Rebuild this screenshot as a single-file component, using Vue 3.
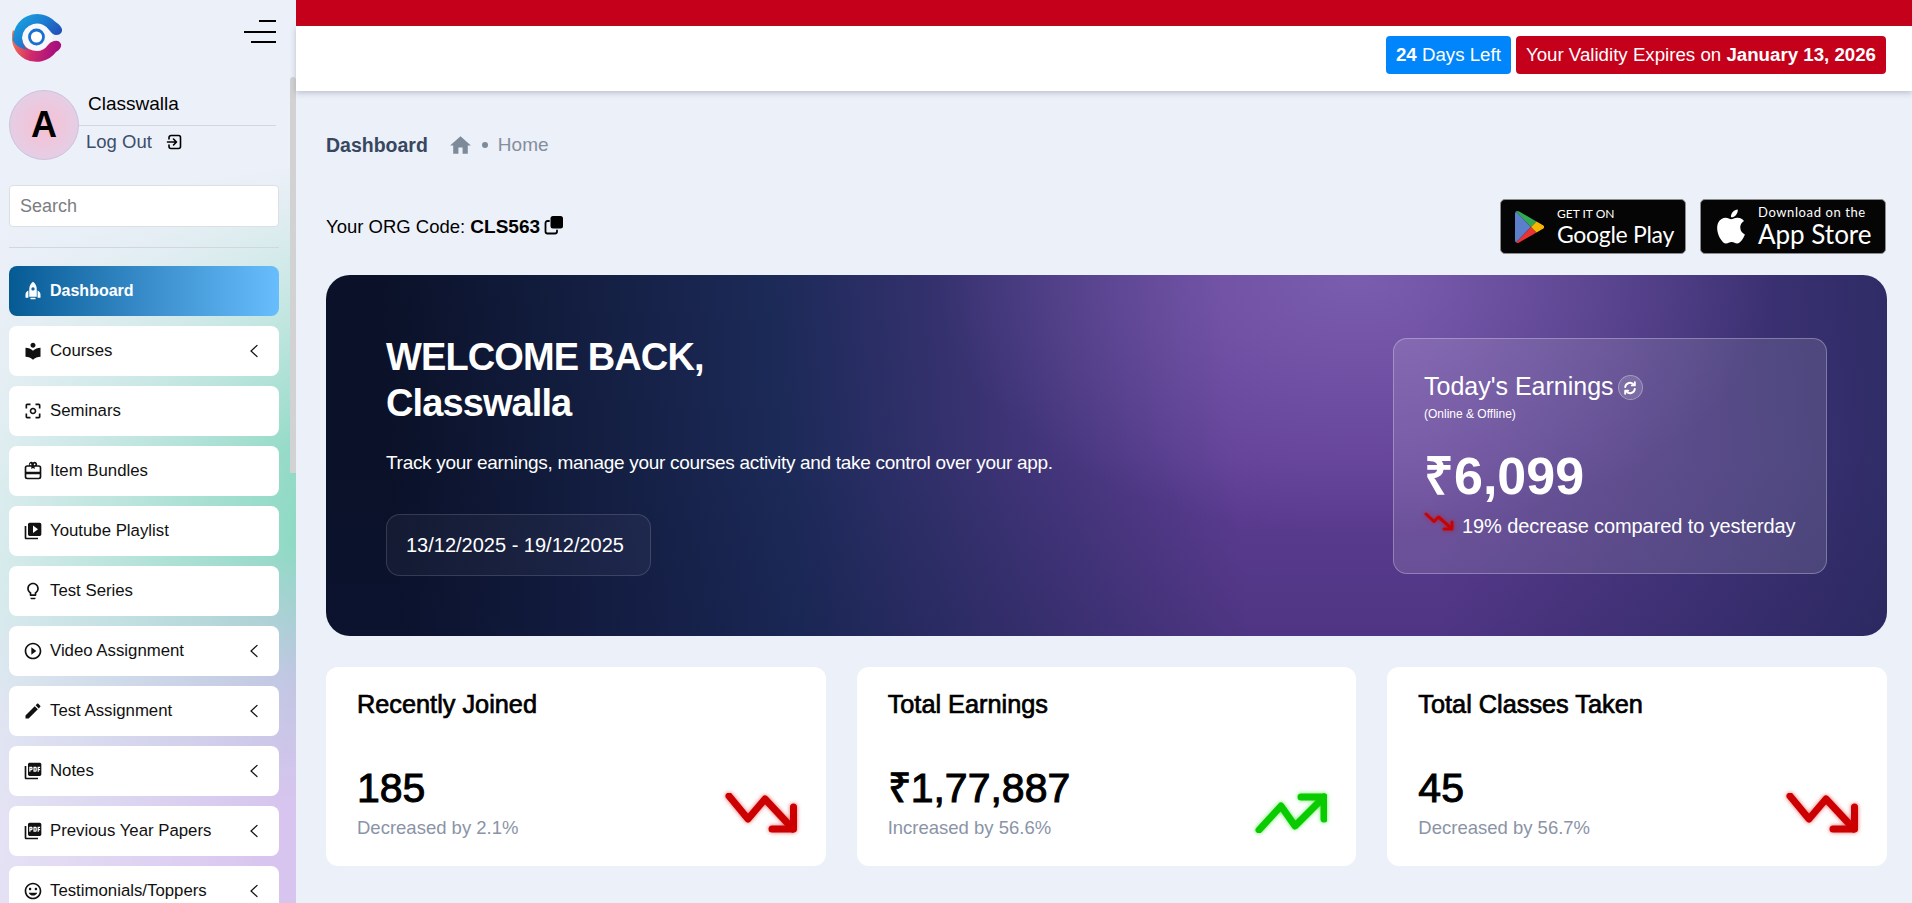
<script setup>
const P = {
  rocket: 'M12 1c3 2.300 4.500 5.300 4.500 9v9h-9v-9C7.500 6.300 9 3.300 12 1zm0 6.500a2 2 0 1 0 0 4 2 2 0 0 0 0-4zM6.500 11.500V20H3v-3.500c0-2.200 1.300-4 3.500-5zm11 0c2.200 1 3.500 2.800 3.500 5V20h-3.500v-8.500zM9 20h6v2H9z',
  book: 'M12 11.55C9.64 9.35 6.48 8 3 8v11c3.48 0 6.64 1.35 9 3.55 2.36-2.19 5.52-3.55 9-3.55V8c-3.48 0-6.64 1.35-9 3.55zM12 8c1.66 0 3-1.34 3-3s-1.34-3-3-3-3 1.34-3 3 1.34 3 3 3z',
  focus: 'M5 15H3v4c0 1.1.9 2 2 2h4v-2H5v-4zM5 5h4V3H5c-1.1 0-2 .9-2 2v4h2V5zm14-2h-4v2h4v4h2V5c0-1.1-.9-2-2-2zm0 16h-4v2h4c1.1 0 2-.9 2-2v-4h-2v4zM12 8c-2.21 0-4 1.79-4 4s1.79 4 4 4 4-1.79 4-4-1.79-4-4-4zm0 6c-1.1 0-2-.9-2-2s.9-2 2-2 2 .9 2 2-.9 2-2 2z',
  gift: 'M5 5h2.200A3 3 0 0 1 7 4a3 3 0 0 1 5-2.200A3 3 0 0 1 17 4c0 .35-.06.68-.2 1H19a3 3 0 0 1 3 3v11a3 3 0 0 1-3 3H5a3 3 0 0 1-3-3V8a3 3 0 0 1 3-3zm5-1a1 1 0 1 0-1 1h1V4zm5 0a1 1 0 1 0-2 0v1h1a1 1 0 0 0 1-1zM4 8v5h16V8a1 1 0 0 0-1-1h-5v2.500l-2-1.200-2 1.200V7H5a1 1 0 0 0-1 1zm0 8v3a1 1 0 0 0 1 1h14a1 1 0 0 0 1-1v-3H4z',
  video: 'M4 6H2v14c0 1.1.9 2 2 2h14v-2H4V6zm16-4H8c-1.1 0-2 .9-2 2v12c0 1.1.9 2 2 2h12c1.1 0 2-.9 2-2V4c0-1.1-.9-2-2-2zm-8 12.500v-9l6 4.500-6 4.500z',
  bulb: 'M9 21c0 .55.45 1 1 1h4c.55 0 1-.45 1-1v-1H9v1zm3-19C8.14 2 5 5.14 5 9c0 2.38 1.19 4.47 3 5.74V17c0 .55.45 1 1 1h6c.55 0 1-.45 1-1v-2.260c1.810-1.270 3-3.360 3-5.740 0-3.860-3.140-7-7-7zm2.850 11.100l-.85.6V16h-4v-2.300l-.85-.6C7.800 12.160 7 10.630 7 9c0-2.760 2.240-5 5-5s5 2.240 5 5c0 1.630-.8 3.160-2.150 4.100z',
  play: 'M10 16.500l6-4.500-6-4.500v9zM12 2C6.480 2 2 6.480 2 12s4.480 10 10 10 10-4.480 10-10S17.520 2 12 2zm0 18c-4.410 0-8-3.590-8-8s3.590-8 8-8 8 3.590 8 8-3.590 8-8 8z',
  edit: 'M3 17.250V21h3.750L17.810 9.940l-3.750-3.750L3 17.250zM20.710 7.040c.39-.39.39-1.020 0-1.410l-2.340-2.340c-.39-.39-1.020-.39-1.410 0l-1.830 1.830 3.750 3.750 1.830-1.830z',
  pdf: 'M20 2H8c-1.100 0-2 .9-2 2v12c0 1.100.9 2 2 2h12c1.100 0 2-.9 2-2V4c0-1.100-.9-2-2-2zm-8.500 7.500c0 .83-.67 1.500-1.500 1.500H9v2H7.500V7H10c.83 0 1.500.67 1.500 1.500v1zm5 2c0 .83-.67 1.500-1.500 1.500h-2.500V7H15c.83 0 1.500.67 1.500 1.500v3zm4-3H19v1h1.500V11H19v2h-1.500V7h3v1.500zM9 9.500h1v-1H9v1zM4 6H2v14c0 1.100.9 2 2 2h14v-2H4V6zm10 5.500h1v-3h-1v3z',
  smile: 'M11.990 2C6.470 2 2 6.480 2 12s4.470 10 9.990 10C17.520 22 22 17.520 22 12S17.520 2 11.990 2zM12 20c-4.420 0-8-3.580-8-8s3.580-8 8-8 8 3.580 8 8-3.580 8-8 8zm3.500-9c.83 0 1.500-.67 1.500-1.500S16.330 8 15.500 8 14 8.670 14 9.500s.67 1.500 1.500 1.500zm-7 0c.83 0 1.500-.67 1.500-1.500S9.330 8 8.500 8 7 8.670 7 9.500 7.670 11 8.500 11zm3.500 6.500c2.330 0 4.310-1.460 5.110-3.500H6.890c.8 2.040 2.780 3.500 5.110 3.500z'
}
const menu = [
  { label: 'Dashboard', icon: P.rocket, active: true },
  { label: 'Courses', icon: P.book, more: true },
  { label: 'Seminars', icon: P.focus },
  { label: 'Item Bundles', icon: P.gift },
  { label: 'Youtube Playlist', icon: P.video },
  { label: 'Test Series', icon: P.bulb },
  { label: 'Video Assignment', icon: P.play, more: true },
  { label: 'Test Assignment', icon: P.edit, more: true },
  { label: 'Notes', icon: P.pdf, more: true },
  { label: 'Previous Year Papers', icon: P.pdf, more: true },
  { label: 'Testimonials/Toppers', icon: P.smile, more: true }
]
const stats = [
  { title: 'Recently Joined', value: '185', sub: 'Decreased by 2.1%', up: false },
  { title: 'Total Earnings', value: '₹1,77,887', sub: 'Increased by 56.6%', up: true },
  { title: 'Total Classes Taken', value: '45', sub: 'Decreased by 56.7%', up: false }
]
</script>

<template>
  <div class="app">
    <aside class="side">
      <div class="scroll"></div>
      <div class="brand">
        <svg class="logo" viewBox="0 0 50 50" width="50" height="50">
          <defs>
            <linearGradient id="lgTop" x1="0.1" y1="0" x2="0.9" y2="0.6">
              <stop offset="0" stop-color="#18a6de" />
              <stop offset="0.55" stop-color="#1c7dd2" />
              <stop offset="1" stop-color="#2350b6" />
            </linearGradient>
            <linearGradient id="lgBot" x1="0" y1="0" x2="1" y2="0.15">
              <stop offset="0" stop-color="#f77a4e" />
              <stop offset="0.5" stop-color="#cf2a6c" />
              <stop offset="1" stop-color="#a50f7e" />
            </linearGradient>
          </defs>
          <circle cx="24.500" cy="25" r="16" fill="#f6f8fc" />
          <path d="M1 18A24.500 24.500 0 0 0 44 40Q50 36 49 32Q47 27.500 42 29Q38 30 36 33A14.500 14.500 0 0 1 10 27Z" fill="url(#lgBot)" />
          <path d="M1 29A24.500 24.500 0 0 1 43 9.500Q51 15 50 19Q49 23 44 23Q41 23 38 19A15 15 0 0 0 10 26Q11 36 17 38Q6 37 1 29Z" fill="url(#lgTop)" />
          <circle cx="24.500" cy="25" r="7" fill="#fff" stroke="#1b6fd0" stroke-width="2.800" />
        </svg>
        <div class="burger"><i class="b1"></i><i class="b2"></i><i class="b3"></i></div>
      </div>

      <div class="profile">
        <div class="avatar">A</div>
        <div class="who">
          <div class="name">Classwalla</div>
          <div class="logout">
            <span>Log Out</span>
            <svg viewBox="0 0 16 16" width="16" height="16" fill="none" stroke="#000" stroke-width="1.600" stroke-linecap="round" stroke-linejoin="round">
              <path d="M3 5V3.500A2 2 0 0 1 5 1.500h7.500a2 2 0 0 1 2 2v9a2 2 0 0 1-2 2H5a2 2 0 0 1-2-2V11" />
              <path d="M1.500 8h8.500M7.500 5l3 3-3 3" />
            </svg>
          </div>
        </div>
      </div>

      <div class="search"><input placeholder="Search" /></div>
      <hr class="rule" />

      <nav class="menu">
        <a v-for="m in menu" :key="m.label" class="item" :class="{ on: m.active }">
          <svg class="ic" viewBox="0 0 24 24" width="20" height="20"><path :d="m.icon" fill="currentColor" fill-rule="evenodd" /></svg>
          <span class="lab">{{ m.label }}</span>
          <svg v-if="m.more" class="chev" viewBox="0 0 10 14" width="10" height="14" fill="none" stroke="#111" stroke-width="1.200" stroke-linecap="round"><path d="M8 1.500 2 7l6 5.500" /></svg>
        </a>
      </nav>
    </aside>

    <main class="main">
      <div class="topstrip"></div>
      <header class="topbar">
        <span class="badge blue"><b>24</b> Days Left</span>
        <span class="badge red">Your Validity Expires on <b>January 13, 2026</b></span>
      </header>

      <div class="page">
        <div class="crumbs">
          <span class="crumb-title">Dashboard</span>
          <svg viewBox="0 0 24 24" width="25" height="25"><path d="M10 20v-6h4v6h5v-8h3L12 3 2 12h3v8z" fill="#7d8a99" /></svg>
          <i class="dot"></i>
          <span class="crumb-home">Home</span>
        </div>

        <div class="orgrow">
          <div class="org">
            <span>Your ORG Code: <b>CLS563</b></span>
            <svg viewBox="0 0 20 20" width="20" height="20" class="copy">
              <rect x="6.500" y="1" width="12.500" height="12.500" rx="2.500" fill="#000" />
              <path d="M5 6H3.500A2 2 0 0 0 1.500 8v8.500a2 2 0 0 0 2 2H11a2 2 0 0 0 2-2V15.500" fill="none" stroke="#000" stroke-width="1.800" stroke-linecap="round" />
            </svg>
          </div>
          <div class="stores">
            <div class="store">
              <svg viewBox="0 0 32 36" width="32" height="36">
                <path d="M2 2.500 17 18 2 33.500c-.7-.5-1-1.300-1-2.300V4.800c0-1 .3-1.800 1-2.300z" fill="#5b7fcb" />
                <path d="M2 2.500c.9-.6 2-.6 3.200.1L22.500 12.500 17 18z" fill="#34a853" />
                <path d="M2 33.500c.9.6 2 .6 3.200-.1L22.500 23.500 17 18z" fill="#ea3333" />
                <path d="M22.500 12.500l6.500 3.700c1.500.9 1.500 2.700 0 3.600l-6.500 3.700L17 18z" fill="#f6b704" />
              </svg>
              <div class="st">
                <small class="gs">GET IT ON</small>
                <strong class="gb">Google Play</strong>
              </div>
            </div>
            <div class="store apple-store">
              <svg viewBox="0 0 24 24" width="34" height="39"><path fill="#fff" d="M12.152 6.896c-.948 0-2.415-1.078-3.960-1.040-2.040.027-3.910 1.183-4.961 3.014-2.117 3.675-.546 9.103 1.519 12.090 1.013 1.454 2.208 3.090 3.792 3.039 1.520-.065 2.090-.987 3.935-.987 1.831 0 2.350.987 3.960.948 1.637-.026 2.676-1.480 3.676-2.948 1.156-1.688 1.636-3.325 1.662-3.415-.039-.013-3.182-1.221-3.220-4.857-.026-3.040 2.480-4.494 2.597-4.559-1.429-2.090-3.623-2.324-4.390-2.376-2-.156-3.675 1.090-4.610 1.090zM15.530 3.830c.843-1.012 1.400-2.427 1.245-3.830-1.207.052-2.662.805-3.532 1.818-.780.896-1.454 2.338-1.273 3.714 1.338.104 2.715-.688 3.559-1.701" /></svg>
              <div class="st">
                <small class="as">Download on the</small>
                <strong class="ab">App Store</strong>
              </div>
            </div>
          </div>
        </div>

        <section class="hero">
          <div class="hello">
            <h1>WELCOME BACK,<br />Classwalla</h1>
            <p>Track your earnings, manage your courses activity and take control over your app.</p>
            <div class="range">13/12/2025 - 19/12/2025</div>
          </div>
          <div class="glass">
            <div class="g-title">
              Today's Earnings
              <span class="spin">
                <svg viewBox="0 0 16 16" width="14" height="14" fill="none" stroke="#fff" stroke-width="2.200" stroke-linecap="round" stroke-linejoin="round">
                  <path d="M2.500 7A5.500 5.500 0 0 1 12.500 4.500" /><path d="M13.500 1.500v3.500H10" />
                  <path d="M13.500 9A5.500 5.500 0 0 1 3.500 11.500" /><path d="M2.500 14.500V11H6" />
                </svg>
              </span>
            </div>
            <div class="g-sub">(Online &amp; Offline)</div>
            <div class="g-amt">₹6,099</div>
            <div class="g-chg">
              <svg viewBox="0 0 30 20" width="30" height="20" fill="none" stroke="#c40404" stroke-width="3" stroke-linecap="round" stroke-linejoin="round" class="glow-r">
                <path d="M2 2 10 9.500 14.500 5 27 16" /><path d="M20 17H28V10" />
              </svg>
              19% decrease compared to yesterday
            </div>
          </div>
        </section>

        <section class="stats">
          <article v-for="s in stats" :key="s.title" class="stat">
            <h3>{{ s.title }}</h3>
            <div class="num">{{ s.value }}</div>
            <div class="sub">{{ s.sub }}</div>
            <svg v-if="s.up" class="trend glow-g" viewBox="0 0 72 40" width="72" height="40" fill="none" stroke="#0acb00" stroke-width="7" stroke-linecap="round" stroke-linejoin="round">
              <path d="M4 37 26 13 40 33 69 4" /><path d="M46 4H69V26" />
            </svg>
            <svg v-else class="trend glow-r" viewBox="0 0 72 40" width="72" height="40" fill="none" stroke="#cc0000" stroke-width="7" stroke-linecap="round" stroke-linejoin="round">
              <path d="M4 3 23 26 40 6 68 36" /><path d="M47 36H68.500V14" />
            </svg>
          </article>
        </section>
      </div>
    </main>
  </div>
</template>

<style>
html, body { margin: 0; background: #ecf0f8; overflow: hidden; }
</style>

<style scoped>
.app {
  display: flex;
  height: 100vh;
  overflow: hidden;
  font-family: "Liberation Sans", Arial, sans-serif;
  color: #000;
  background: #ecf0f8;
}
.side {
  position: relative;
  flex: 0 0 296px;
  box-sizing: border-box;
  padding: 0 17px 0 9px;
  overflow: hidden;
  background:
    linear-gradient(100deg, #ecf0f8 4%, rgba(236, 240, 248, 0) 92%),
    linear-gradient(172deg, #ecf0f8 22%, #88d8c0 52%, #88d8c0 62%, #c0c6e2 76%, #d8c5ef 90%);
}
.scroll {
  position: absolute;
  right: 0;
  top: 77px;
  width: 6px;
  height: 396px;
  background: #d2d2d2;
  border-radius: 3px 3px 0 0;
}
.brand {
  display: flex;
  justify-content: space-between;
  align-items: center;
  height: 74px;
  padding: 0 3px 0 3px;
}
.burger { display: flex; flex-direction: column; align-items: flex-end; gap: 8.500px; margin-bottom: 11px; }
.burger i { display: block; height: 2px; background: #000; }
.b1 { width: 17px; }
.b2 { width: 32px; }
.b3 { width: 25px; }
.profile { display: flex; align-items: center; margin-top: 16px; }
.avatar {
  flex: 0 0 70px;
  height: 70px;
  box-sizing: border-box;
  display: flex;
  align-items: center;
  justify-content: center;
  border: 1px solid #cfc0dc;
  border-radius: 50%;
  background: radial-gradient(circle, #f8bfd2 0%, #e2d0e8 80%);
  font-size: 36px;
  font-weight: 700;
}
.who { flex: 1; padding-bottom: 5px; margin-right: 3px; }
.name {
  padding: 1px 0 9px 9px;
  border-bottom: 1px solid #d3d6df;
  font-size: 19px;
  line-height: 24px;
}
.logout {
  display: flex;
  align-items: center;
  gap: 14px;
  padding: 4px 0 0 7px;
  font-size: 18.500px;
  line-height: 24px;
  color: #3b4e6b;
}
.search { margin-top: 25px; }
.search input {
  display: block;
  width: 100%;
  height: 42px;
  box-sizing: border-box;
  padding: 0 10px;
  border: 1px solid #dcdfe6;
  border-radius: 4px;
  background: #fff;
  font: 18px "Liberation Sans", Arial, sans-serif;
  outline: none;
}
.search input::placeholder { color: #7a7d82; opacity: 1; }
.rule { margin: 20px 0 18px; border: 0; border-top: 1px solid #d3d6df; }
.menu { display: flex; flex-direction: column; gap: 10px; }
.item {
  display: flex;
  align-items: center;
  flex: 0 0 50px;
  box-sizing: border-box;
  padding: 0 20px 0 14px;
  border-radius: 8px;
  background: #fff;
  font-size: 16.800px;
  color: #111;
}
.item.on {
  background: linear-gradient(90deg, #065a94 0%, #68bdfd 100%);
  color: #fff;
  font-weight: 700;
  font-size: 16px;
}
.ic { flex: none; margin-right: 7px; }
.lab { flex: 1; white-space: nowrap; }
.chev { flex: none; }

.main { flex: 1; min-width: 0; display: flex; flex-direction: column; }
.topstrip { flex: 0 0 26px; background: #c5001a; }
.topbar {
  flex: 0 0 65px;
  box-sizing: border-box;
  display: flex;
  justify-content: flex-end;
  align-items: flex-start;
  gap: 5px;
  padding: 10px 26px 0 0;
  background: #fff;
  box-shadow: 0 2px 6px rgba(90, 100, 130, 0.35);
  position: relative;
}
.badge {
  display: block;
  height: 38px;
  box-sizing: border-box;
  padding: 0 10px;
  border-radius: 4px;
  color: #fff;
  font-size: 18.700px;
  line-height: 38px;
  white-space: nowrap;
}
.blue { background: #0085fb; }
.red { background: #c5001a; }

.page { flex: 1; padding: 0 25px 0 30px; }
.crumbs { display: flex; align-items: center; height: 28px; margin-top: 40px; }
.crumb-title { font-size: 19.500px; font-weight: 700; color: #36475f; margin-right: 20px; }
.dot { width: 6px; height: 6px; border-radius: 50%; background: #7d8a99; margin: 0 10px 0 9px; }
.crumb-home { font-size: 19px; color: #848e9e; }
.orgrow { display: flex; justify-content: space-between; align-items: center; margin-top: 40px; height: 55px; }
.org { display: flex; align-items: center; gap: 4px; font-size: 18.500px; }
.org b { font-size: 19px; font-weight: 700; }
.copy { margin-top: -4px; }
.stores { display: flex; gap: 14px; margin-right: 1px; }
.store {
  width: 186px;
  height: 55px;
  box-sizing: border-box;
  display: flex;
  align-items: center;
  gap: 11px;
  padding: 0 0 0 13px;
  border: 1px solid #8c8c8c;
  border-radius: 5px;
  background: #050505;
  color: #fff;
}
.apple-store { padding-left: 13px; gap: 10px; }
.st { display: flex; flex-direction: column; font-family: Lato, sans-serif; white-space: nowrap; }
.gs { font-size: 12px; line-height: 15px; font-weight: 400; }
.gb { font-size: 23px; line-height: 27px; font-weight: 400; letter-spacing: -0.300px; }
.as { font-size: 13px; line-height: 15px; letter-spacing: 0.600px; }
.ab { font-size: 26px; line-height: 28px; font-weight: 400; }

.hero {
  display: flex;
  justify-content: space-between;
  align-items: center;
  height: 361px;
  box-sizing: border-box;
  margin-top: 21px;
  padding: 0 60px;
  border-radius: 24px;
  color: #fff;
  background:
    radial-gradient(ellipse 420px 260px at 66% 0%, rgba(150, 125, 200, 0.5), rgba(150, 125, 200, 0) 100%),
    linear-gradient(to top, rgba(20, 25, 70, 0.22), rgba(20, 25, 70, 0) 50%),
    linear-gradient(85deg, #0a1128 5%, #1c2a58 30%, #5f3d94 58%, #5f3d94 70%, #2e2c66 100%);
}
.hello { margin-top: -2px; }
.hello h1 { margin: 0; font-size: 38px; line-height: 46px; font-weight: 700; letter-spacing: -0.900px; }
.hello p { margin: 24px 0 0; font-size: 19px; line-height: 26px; letter-spacing: -0.300px; }
.range {
  display: inline-block;
  margin-top: 38px;
  padding: 0 26px 0 19px;
  height: 62px;
  line-height: 60px;
  box-sizing: border-box;
  border: 1px solid rgba(255, 255, 255, 0.14);
  border-radius: 14px;
  background: rgba(255, 255, 255, 0.04);
  font-size: 20px;
}
.glass {
  width: 434px;
  height: 236px;
  box-sizing: border-box;
  padding: 29px 0 0 30px;
  border: 1px solid rgba(255, 255, 255, 0.28);
  border-radius: 14px;
  background: rgba(255, 255, 255, 0.12);
}
.g-title { display: flex; align-items: center; gap: 4px; font-size: 25px; line-height: 36px; }
.spin {
  width: 25px;
  height: 25px;
  display: flex;
  align-items: center;
  justify-content: center;
  margin-top: 4px;
  border: 1px solid rgba(255, 255, 255, 0.3);
  border-radius: 50%;
  background: rgba(255, 255, 255, 0.15);
  box-sizing: border-box;
}
.g-sub { font-size: 12px; line-height: 14px; margin-top: 3px; }
.g-amt { margin-top: 26px; font-size: 52px; line-height: 58px; font-weight: 700; }
.g-chg { display: flex; align-items: center; gap: 8px; margin-top: 8px; font-size: 20px; line-height: 26px; letter-spacing: -0.100px; white-space: nowrap; }
.g-chg svg { margin-top: -8px; }
.glow-r { filter: drop-shadow(0 0 2px rgba(220, 0, 0, 0.6)); }
.glow-g { filter: drop-shadow(0 0 2px rgba(10, 220, 0, 0.6)); }

.stats { display: grid; grid-template-columns: repeat(3, 1fr); gap: 31px; margin-top: 31px; }
.stat {
  position: relative;
  height: 199px;
  box-sizing: border-box;
  padding: 21px 31px 0;
  border-radius: 12px;
  background: #fff;
}
.stat h3 { margin: 0; font-size: 25.300px; line-height: 32px; font-weight: 400; -webkit-text-stroke: 0.700px #000; }
.num { margin-top: 44px; font-size: 41px; line-height: 48px; font-weight: 400; -webkit-text-stroke: 1px #000; }
.sub { margin-top: 4px; font-size: 18.500px; line-height: 24px; color: #8a94a6; }
.trend { position: absolute; right: 29px; top: 126px; }
</style>
